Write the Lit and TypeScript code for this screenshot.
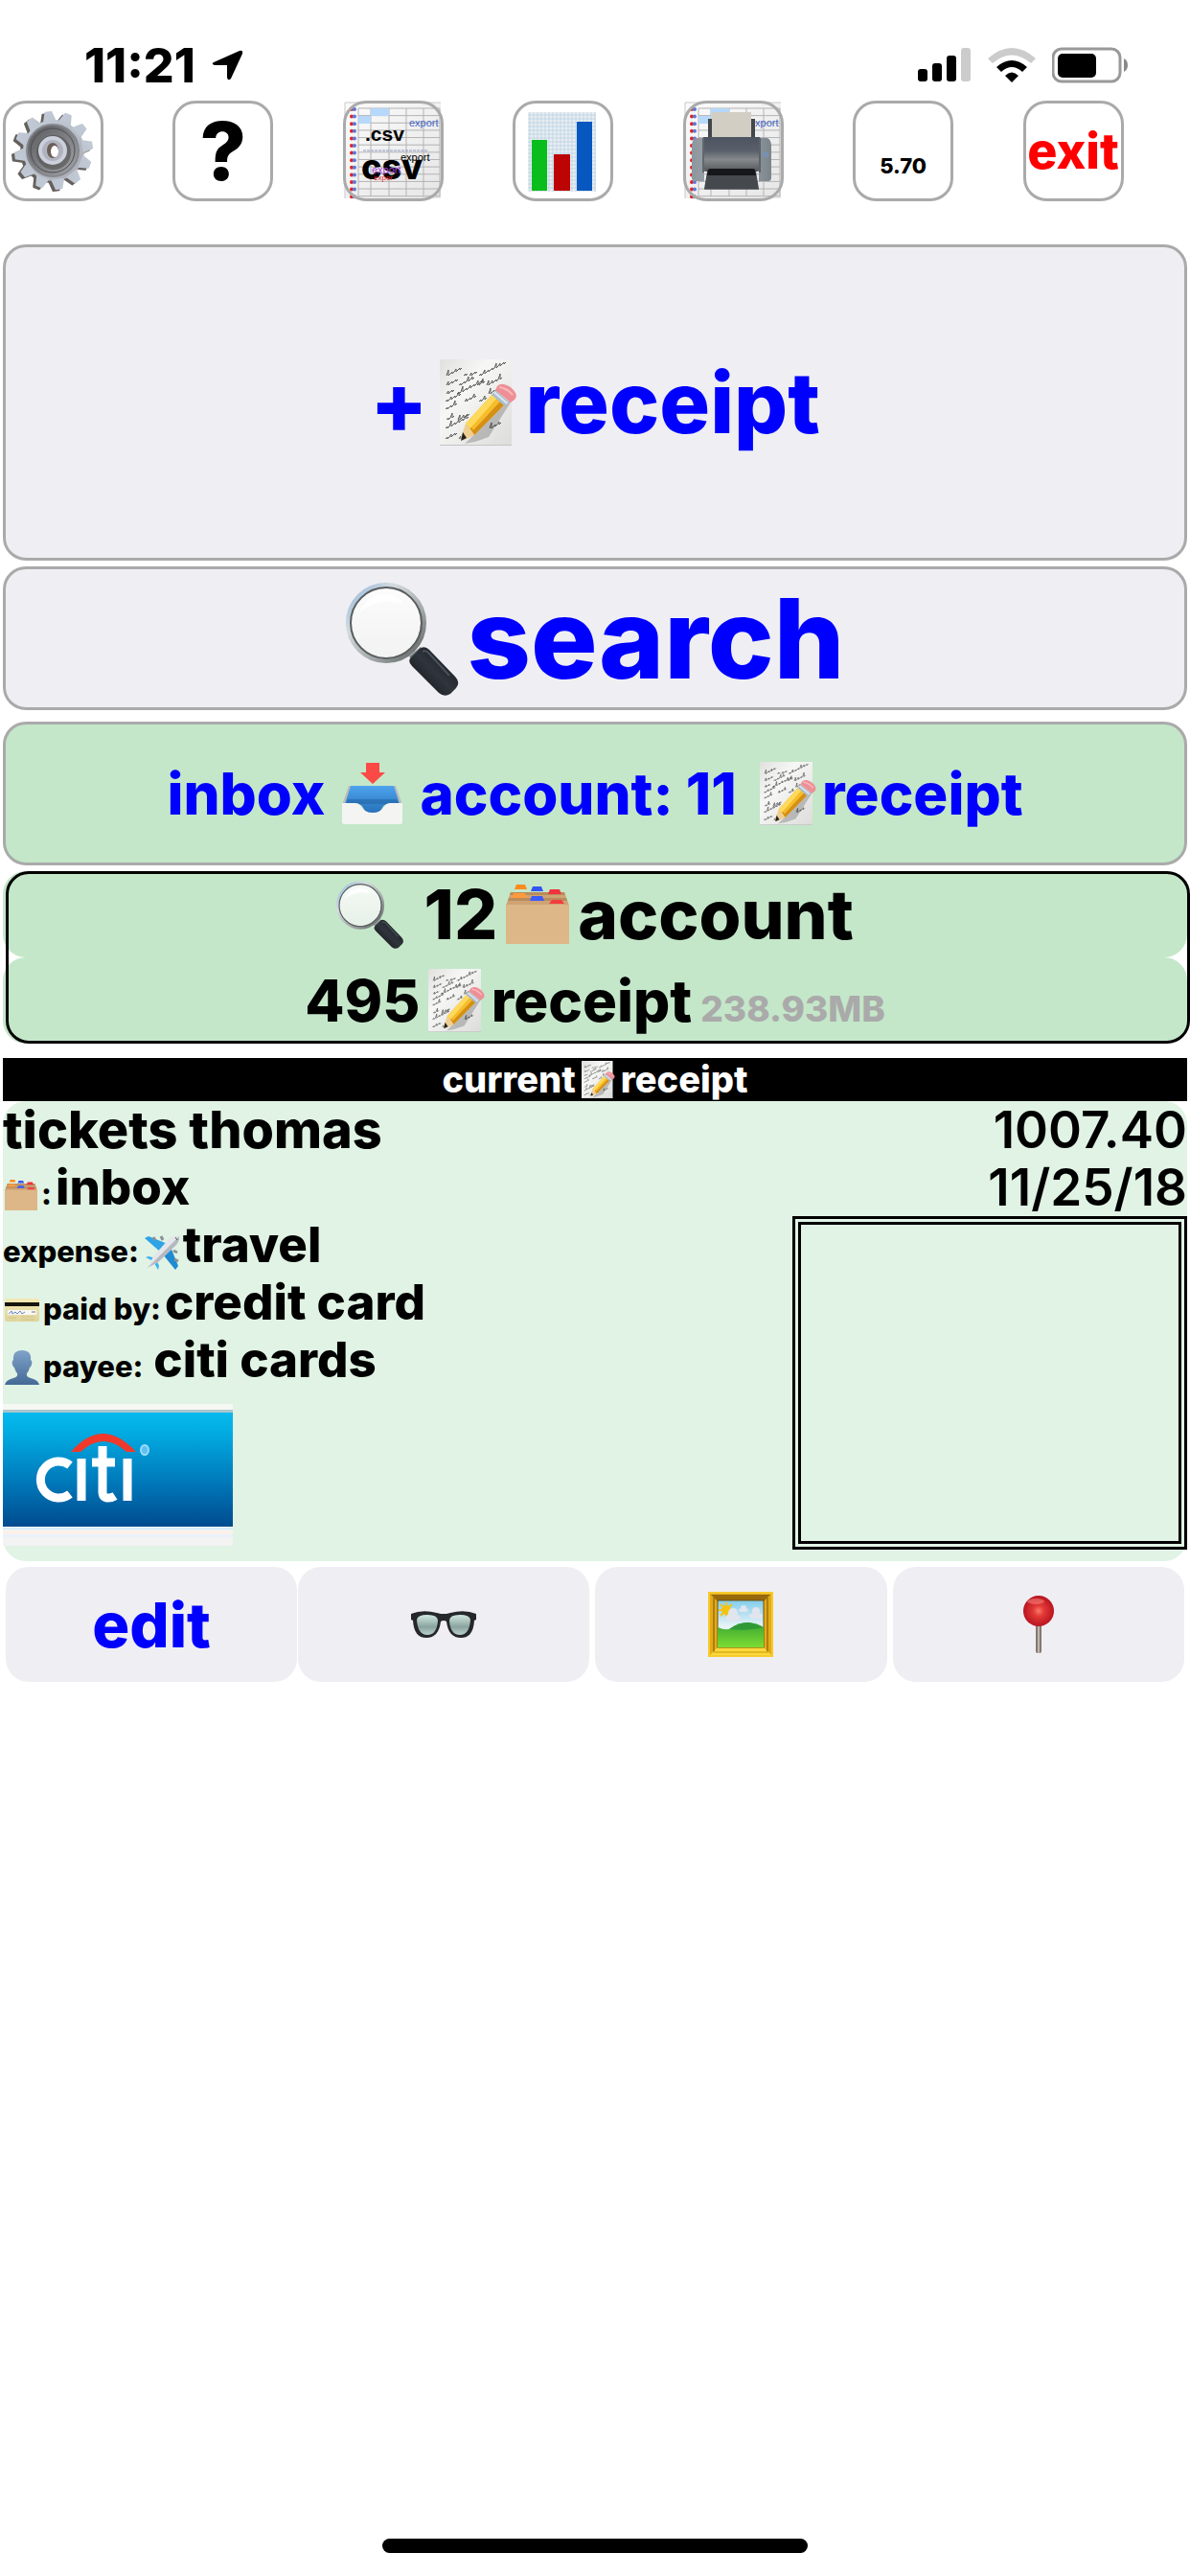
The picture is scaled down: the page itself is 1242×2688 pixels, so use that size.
import { LitElement, html, svg, css } from "lit";
import { customElement } from "lit/decorators.js";

const range = (n: number) => Array.from({ length: n }, (_, i) => i);

/* ---------- shared icons ---------- */

/* Rising strokes that make up one handwritten word. */
const STROKES = [6, 2, 3, 2, 4, 2, 2, 5, 3, 2];
const word = (x: number, y: number, letters: number, seed: number) =>
  `M${x} ${y}` +
  range(letters)
    .map((i) => {
      const h = STROKES[(i + seed) % STROKES.length];
      return `l2 ${-h}l0 ${h}l2 -2`;
    })
    .join("");

/* x, baseline, letters of each word on the note. */
const NOTE = [
  [7, 17, 4], [25, 17, 1], [31, 17, 2], [41, 17, 7],
  [7, 27, 3], [20, 27, 4], [39, 27, 2], [49, 27, 4],
  [7, 36, 2], [18, 36, 7], [51, 36, 3],
  [6, 44, 4], [26, 44, 3], [41, 44, 2], [51, 44, 2],
  [6, 52, 3],
  [7, 63, 2], [19, 63, 3], [34, 63, 3],
  [6, 72, 6], [52, 72, 3],
  [6, 83, 3], [20, 83, 1],
];

const memo = (size: string) => html`
  <svg class="icon ${size}" viewBox="0 0 81 90" aria-hidden="true">
    <defs>
      <linearGradient id="paper" x1="0" y1="0" x2="1" y2="1">
        <stop offset="0" stop-color="#e0e0de" />
        <stop offset=".35" stop-color="#f7f7f6" />
        <stop offset="1" stop-color="#dcdcda" />
      </linearGradient>
    </defs>
    <rect x="0" y="0" width="75" height="90" fill="url(#paper)" />
    <rect x="0" y="89" width="75" height="1" fill="#c4c4c4" />
    <g fill="none" stroke="#5c5c5c" stroke-width="1" stroke-linejoin="round">
      ${NOTE.map(([x, y, n], i) => svg`<path d=${word(x, y, n, i)} />`)}
    </g>
    <path d="M26 88l36-35 17-16-28 44-14 5z" fill="#000" opacity=".2" />
    <path d="M27 67L56 35l12 11L36 79z" fill="#f3b51c" />
    <path d="M27 67L56 35l5 4-29 33z" fill="#ffd95c" />
    <path d="M32 72l31-30 6 4L36 79z" fill="#d58f14" />
    <path d="M33 71l28-31 3 3-29 31z" fill="#f6bd2c" />
    <path d="M27 67l9 12-12 6-2-3z" fill="#efce92" />
    <path d="M24 76l4 6-6 3z" fill="#222" />
    <path d="M54 37l4-5 14 12-4 5z" fill="#a9bdcb" />
    <path d="M56 35l1-2 14 12-1 2z" fill="#dce6ee" />
    <path d="M58 32l2-4q3-3 7-2 8 2 12 9 2 4-1 7l-4 3z" fill="#ee8f96" />
    <path d="M62 29q8 1 14 8" stroke="#f9b9bc" stroke-width="2" fill="none" />
  </svg>
`;

const magnifier = (size: string) => html`
  <svg class="icon ${size}" viewBox="0 0 118 119" aria-hidden="true">
    <defs>
      <linearGradient id="rim" x1="0" y1="0" x2="1" y2="1">
        <stop offset="0" stop-color="#8fb6de" />
        <stop offset=".3" stop-color="#d5dbde" />
        <stop offset=".65" stop-color="#a3a9a8" />
        <stop offset="1" stop-color="#585c5c" />
      </linearGradient>
      <linearGradient id="grip" x1="0" y1="1" x2="1" y2="0">
        <stop offset="0" stop-color="#08090b" />
        <stop offset=".5" stop-color="#30353d" />
        <stop offset="1" stop-color="#0c0e11" />
      </linearGradient>
      <linearGradient id="lens" x1="0" y1="0" x2="0" y2="1">
        <stop offset="0" stop-color="#fff" stop-opacity=".85" />
        <stop offset="1" stop-color="#f4f4f3" stop-opacity=".7" />
      </linearGradient>
    </defs>
    <path d="M66 78l12-10 8 10-12 8z" fill="#767c7b" />
    <circle cx="42" cy="43" r="39" fill="url(#lens)" stroke="url(#rim)" stroke-width="6" />
    <circle cx="42" cy="43" r="37" fill="none" stroke="#5a5f5f" stroke-width="2" />
    <path d="M14 32q10-20 29-19 14 1 16 10-22-8-45 9z" fill="#fff" opacity=".8" />
    <path d="M77 70q5-4 10 1l27 28q6 6 1 12l-6 6q-6 4-12-1L69 88q-5-5-1-9z" fill="url(#grip)" />
    <path d="M80 73q3-2 6 1l22 24" stroke="#4a515c" stroke-width="2" fill="none" />
  </svg>
`;

const folder = (size: string) => html`
  <svg class="icon ${size}" viewBox="0 0 66 62" aria-hidden="true">
    <path d="M5 8h56l5 14v38q0 2-2 2H2q-2 0-2-2V22z" fill="#cfa373" />
    <path d="M5 8h56l1 3H4zM3 14h60l1 3H2z" fill="#b98c5c" />
    <path d="M9 5l2-5h9l2 5z" fill="#ff8a1e" />
    <path d="M26 7l2-5h9l2 5z" fill="#3355f5" />
    <path d="M44 10l2-5h10l2 5z" fill="#f0333c" />
    <path d="M6 14l2-5h12l2 5z" fill="#ff9a3c" />
    <path d="M25 17l2-5h11l2 5z" fill="#3c5cf8" />
    <path d="M45 20l3-4h10l3 4z" fill="#f43b40" />
    <path d="M0 23q0-2 2-2h62q2 0 2 2v37q0 2-2 2H2q-2 0-2-2z" fill="#deb788" />
  </svg>
`;

const tray = () => html`
  <svg class="icon tray" viewBox="0 0 63 64" aria-hidden="true">
    <defs>
      <linearGradient id="well" x1="0" y1="0" x2="0" y2="1">
        <stop offset="0" stop-color="#4ea4ee" />
        <stop offset="1" stop-color="#256fb8" />
      </linearGradient>
    </defs>
    <path d="M7 24h49l7 20H0z" fill="#b9bcbb" />
    <path d="M9 24h45l6 19H48q-4 0-6 4-3 6-10 6t-10-6q-2-4-6-4H3z" fill="url(#well)" />
    <path d="M6 38h51l2 5H4z" fill="#1f5f9f" opacity=".5" />
    <path d="M0 42h14q4 0 6 4 4 6 12 6t12-6q2-4 6-4h13v20q0 2-2 2H2q-2 0-2-2z" fill="#f4f4f2" />
    <path d="M25 0h14v10h6L32 22 19 10h6z" fill="#fb4a46" />
  </svg>
`;

const plane = () => html`
  <svg class="icon small" viewBox="0 0 36 36" aria-hidden="true">
    <path d="M0 3l4-2 20 8-8 8z" fill="#2ea3e6" />
    <path d="M32 36l3-4-8-20-8 8z" fill="#1e8bd2" />
    <path d="M1 23l3-1 8 2-3 3zM14 36l1-4-3-7-2 4z" fill="#3ab0f0" />
    <path d="M9 2l2 3M17 1l2 4M34 18l-4-2M35 27l-4-2" stroke="#8b9198" stroke-width="3" />
    <path d="M36 1q1 4-3 9L14 28 3 34l6-12L26 3q5-4 10-2z" fill="#e4e6ea" />
    <path d="M36 1q1 4-3 9L14 28 3 34z" fill="#b4b8bf" />
    <path d="M32 2l2 3" stroke="#4c5660" stroke-width="1" />
  </svg>
`;

const card = () => html`
  <svg class="icon small" viewBox="0 0 36 36" aria-hidden="true">
    <defs>
      <linearGradient id="plastic" x1="0" y1="0" x2="0" y2="1">
        <stop offset="0" stop-color="#f3e9b4" />
        <stop offset="1" stop-color="#e0d49c" />
      </linearGradient>
    </defs>
    <rect x="0" y="6" width="36" height="24" rx="2" fill="url(#plastic)" />
    <rect x="0" y="10" width="36" height="4" fill="#15130d" />
    <rect x="3" y="18" width="30" height="5" fill="#f7f7f3" />
    <path d="M4 22l3-3 1 3 3-2 2 2 3-3 2 3 3-2" stroke="#6a86c4" fill="none" />
    <path d="M28 20h4" stroke="#777" stroke-width="1" />
    <path d="M4 26h8M17 25h14M17 28h14" stroke="#d0c48e" stroke-width="1" />
  </svg>
`;

const person = () => html`
  <svg class="icon small" viewBox="0 0 36 36" aria-hidden="true">
    <defs>
      <linearGradient id="bust" x1="0" y1="0" x2="0" y2="1">
        <stop offset="0" stop-color="#7fa3c9" />
        <stop offset="1" stop-color="#456a96" />
      </linearGradient>
    </defs>
    <path
      d="M18 0q10 0 9 10 2 1 1 5-1 3-2 3-1 4-3 6-1 4 4 5 8 2 9 7H0q1-5 9-7 5-1 4-5-2-2-3-6-1 0-2-3-1-4 1-5-1-10 9-10z"
      fill="url(#bust)"
    />
  </svg>
`;

const citi = () => html`
  <svg class="logo" viewBox="0 0 240 148" role="img" aria-label="citi">
    <defs>
      <linearGradient id="sky" x1="0" y1="0" x2="0" y2="1">
        <stop offset="0" stop-color="#06b9ee" />
        <stop offset=".15" stop-color="#02aee4" />
        <stop offset=".6" stop-color="#007abb" />
        <stop offset="1" stop-color="#004b8e" />
      </linearGradient>
    </defs>
    <rect width="240" height="148" fill="#f3f3f4" />
    <rect width="240" height="6" fill="#f6f8f4" />
    <rect y="6" width="240" height="4" fill="#a9c6cd" />
    <rect y="9" width="240" height="119" fill="url(#sky)" />
    <rect y="129" width="240" height="2" fill="#d5eefa" />
    <rect y="132" width="240" height="4" fill="#fbf1ea" />
    <rect y="136" width="240" height="3" fill="#eaf1fb" />
    <path d="M71 50q33-38 68 0h-10q-24-22-48 0z" fill="#f0392b" />
    <g fill="none" stroke="#fff">
      <path d="M70 64a19 19 0 1 0 0 30" stroke-width="9" />
      <path d="M82 57v44M130 57v44" stroke-width="9" />
      <path d="M104 44v48q0 6 6 6 4 0 7-2M93 61h24" stroke-width="9" />
    </g>
    <ellipse cx="148" cy="48" rx="4" ry="5" fill="#5fc0f0" stroke="#9adcfa" stroke-width="2" />
  </svg>
`;

const glasses = () => html`
  <svg class="icon glasses" viewBox="0 0 68 28" aria-hidden="true">
    <defs>
      <linearGradient id="tint" x1="0" y1="0" x2="0" y2="1">
        <stop offset="0" stop-color="#cfe8df" />
        <stop offset=".6" stop-color="#8aa39f" />
        <stop offset="1" stop-color="#b9d0ca" />
      </linearGradient>
    </defs>
    <path
      d="M0 3q12-5 27-1l4 1h6l4-1q15-4 27 1v6l-2 1q-1 18-14 18-13 0-15-17-3-2-6 0-2 17-15 17Q3 28 2 10L0 9z"
      fill="#25272a"
    />
    <path d="M6 9q1-5 11-5 11 0 11 6-1 15-11 15Q7 25 6 9z" fill="url(#tint)" />
    <path d="M62 9q-1-5-11-5-11 0-11 6 1 15 11 15 10 0 11-16z" fill="url(#tint)" />
  </svg>
`;

const frame = () => html`
  <svg class="icon framed" viewBox="0 0 68 68" aria-hidden="true">
    <defs>
      <linearGradient id="air" x1="0" y1="0" x2="0" y2="1">
        <stop offset="0" stop-color="#83cdec" />
        <stop offset=".55" stop-color="#e6f3f7" />
      </linearGradient>
      <linearGradient id="grass" x1="0" y1="0" x2="0" y2="1">
        <stop offset="0" stop-color="#37a535" />
        <stop offset="1" stop-color="#7ddc32" />
      </linearGradient>
    </defs>
    <rect width="68" height="68" rx="1" fill="#e2ab17" />
    <path d="M3 3h62L58 10H10z" fill="#96690c" />
    <path d="M0 68h68L58 58H10z" fill="#fbd93a" />
    <rect x="1" y="1" width="66" height="66" fill="none" stroke="#f6cb2d" stroke-width="2" />
    <path d="M6 6v56M62 6v56" stroke="#b07c10" stroke-width="2" />
    <path d="M5 63h58" stroke="#c9930f" stroke-width="1" />
    <rect x="10" y="9" width="48" height="49" fill="url(#air)" stroke="#6b500f" stroke-width="1" />
    <path d="M10 37q9 4 14 1 10-7 19-6 9 1 15 5v21H10z" fill="url(#grass)" />
    <path d="M22 39q9-7 20-7 8 1 15 5-14 4-35 2z" fill="#2f9a35" />
    <circle cx="19" cy="19" r="5" fill="#f5c312" />
    <path d="M19 11v16M11 19h16M13 13l12 12M25 13L13 25" stroke="#f5c312" stroke-width="2" />
    <g fill="#e0e5ee">
      <circle cx="26" cy="22" r="5" />
      <ellipse cx="26" cy="27" rx="8" ry="4" />
      <circle cx="37" cy="17" r="3" />
      <ellipse cx="37" cy="19" rx="5" ry="2" />
      <circle cx="50" cy="20" r="4" />
      <ellipse cx="50" cy="25" rx="7" ry="3" />
    </g>
  </svg>
`;

const pin = () => html`
  <svg class="icon pin" viewBox="0 0 34 60" aria-hidden="true">
    <defs>
      <radialGradient id="bead" cx=".5" cy=".5" r=".5">
        <stop offset="0" stop-color="#fb7a6a" />
        <stop offset=".35" stop-color="#e23a37" />
        <stop offset="1" stop-color="#b81420" />
      </radialGradient>
    </defs>
    <rect x="14" y="28" width="6" height="32" rx="2" fill="#857870" />
    <rect x="16" y="28" width="2" height="32" fill="#c0b6af" />
    <circle cx="17" cy="16" r="16" fill="url(#bead)" />
    <ellipse cx="14" cy="6" rx="9" ry="3" fill="#ff8d88" opacity=".5" />
  </svg>
`;

/* ---------- toolbar pictures ---------- */

const gear = () => html`
  <svg class="art" viewBox="0 0 105 105" aria-hidden="true">
    <defs>
      <linearGradient id="steel" gradientUnits="userSpaceOnUse" x1="-30" y1="-30" x2="30" y2="30">
        <stop offset="0" stop-color="#c3cedb" />
        <stop offset=".5" stop-color="#b9bec8" />
        <stop offset="1" stop-color="#a9a8b0" />
      </linearGradient>
      <linearGradient id="dish" x1="0" y1="0" x2="1" y2="1">
        <stop offset="0" stop-color="#56585b" />
        <stop offset="1" stop-color="#a4a6aa" />
      </linearGradient>
    </defs>
    ${[0, 1].map(
      (layer) => svg`
        <g transform=${layer ? "translate(53 52)" : "translate(50 54)"} fill=${layer ? "url(#steel)" : "#66605c"}>
          <circle r="32" />
          ${range(12).map(
            (i) => svg`<path d="M-7 -30L-4 -40Q-4 -41 -3 -41H3Q4 -41 4 -40L7 -30z" transform="rotate(${i * 30 - 8})" />`
          )}
        </g>
      `
    )}
    <circle cx="52" cy="52" r="27" fill="url(#dish)" stroke="#85888d" stroke-width="2" />
    <circle cx="52" cy="52" r="23" fill="none" stroke="#4b4d50" stroke-width="1" />
    <circle cx="53" cy="54" r="18" fill="#504d4d" opacity=".6" />
    <circle cx="52" cy="52" r="15" fill="#cbd0dc" />
    <circle cx="52" cy="52" r="11" fill="#b0b3be" />
    <ellipse cx="52" cy="52" rx="6" ry="8" fill="#6b5f58" />
    <ellipse cx="54" cy="53" rx="4" ry="6" fill="#fff" />
  </svg>
`;

const sheet = () => svg`
  <defs>
    <linearGradient id="page" x1="0" y1="0" x2="1" y2="1">
      <stop offset="0" stop-color="#fbfbfb" />
      <stop offset="1" stop-color="#e6e6e6" />
    </linearGradient>
  </defs>
  <rect x="2" y="2" width="100" height="100" fill="url(#page)" />
  <path d="M2 102V2h100" fill="none" stroke="#c9c9c9" />
  <g stroke="#b3b3b3" stroke-width="1">
    ${[16, 29, 48, 66, 84, 101].map((x) => svg`<path d="M${x} 8V100" />`)}
    ${range(13).map((i) => svg`<path d="M16 ${8 + i * 7.64}H101" />`)}
  </g>
  <rect x="29" y="8" width="19" height="8" fill="#b5d8fb" />
  <rect x="16" y="16" width="13" height="8" fill="#b5d8fb" />
  ${range(13).map(
    (i) => svg`
      <circle cx="9" cy=${9 + i * 7.6} r="2" fill="#e32222" />
      <circle cx="12" cy=${9 + i * 7.6} r="2" fill="#5a78d8" />`
  )}
  <text class="t-export" x="69" y="27" fill="#4463c4">export</text>
`;

const csvArt = () => html`
  <svg class="art" viewBox="0 0 105 105" aria-hidden="true">
    ${sheet()}
    <text class="t-ext" x="23" y="42">.csv</text>
    <path d="M21 52h67" stroke="#8b9cc9" stroke-width="1" stroke-dasharray="3 1" />
    <text class="t-csv" x="19" y="82">csv</text>
    <text class="t-export" x="60" y="63">export</text>
    <text class="t-export" x="30" y="76" fill="#a445d6">export</text>
    <text class="t-tiny" x="32" y="83" fill="#e32222">expor</text>
  </svg>
`;

const printerArt = () => html`
  <svg class="art" viewBox="0 0 105 105" aria-hidden="true">
    ${sheet()}
    <defs>
      <linearGradient id="body" x1="0" y1="0" x2="0" y2="1">
        <stop offset="0" stop-color="#4c5461" />
        <stop offset=".4" stop-color="#59606a" />
        <stop offset=".65" stop-color="#85898c" />
        <stop offset="1" stop-color="#54585b" />
      </linearGradient>
      <linearGradient id="cap" x1="0" y1="0" x2="1" y2="0">
        <stop offset="0" stop-color="#8d959d" />
        <stop offset=".5" stop-color="#aab2b9" />
        <stop offset="1" stop-color="#7c848b" />
      </linearGradient>
    </defs>
    <path d="M26 19h4v20h-4zM71 19h4v20h-4z" fill="#43464b" />
    <path d="M30 12h41v28H30z" fill="#d3cec4" />
    <path d="M21 38h59v33q0 3-3 3H24q-3 0-3-3z" fill="url(#body)" />
    <path d="M25 74q0-3 3-3h45q3 0 3 3l3 18H22z" fill="#45494d" />
    <path d="M26 73q0-2 3-2h43q3 0 3 2l1 5H25z" fill="#15171a" />
    <path d="M22 92h57v1H22z" fill="#6c7074" />
    <path d="M14 39h8v45H12q-3 0-3-4V46q1-7 5-7zM79 39h8q4 0 5 7v34q0 4-3 4H79z" fill="url(#cap)" />
    <circle cx="86" cy="56" r="3" fill="#7791b4" />
    <path d="M21 39v36M80 39v36" stroke="#2e3236" stroke-width="1" />
  </svg>
`;

const chartArt = () => html`
  <svg class="art" viewBox="0 0 105 105" aria-hidden="true">
    <rect x="16" y="12" width="71" height="83" fill="#eceeef" />
    <g stroke="#bdd7ea" stroke-width="1">
      ${range(18).map((i) => svg`<path d="M${18 + i * 4} 12V95" />`)}
      ${range(20).map((i) => svg`<path d="M16 ${15 + i * 4}H87" />`)}
    </g>
    <path d="M20 41h16v53H20z" fill="#09bd1c" />
    <path d="M43 56h17v38H43z" fill="#bd0404" />
    <path d="M67 22h16v72H67z" fill="#0658c0" />
  </svg>
`;

@customElement("app-root")
export class AppRoot extends LitElement {
  static styles = css`
    :host {
      display: flex;
      flex-direction: column;
      min-height: 100vh;
      background: #fff;
      color: #000;
      font-family: Inter, "Liberation Sans", sans-serif;
      font-weight: 800;
      overflow-x: hidden;
    }
    * {
      box-sizing: border-box;
    }
    button {
      margin: 0;
      padding: 0;
      border: 0;
      background: none;
      color: inherit;
      font: inherit;
      cursor: pointer;
    }
    svg {
      display: block;
      flex: none;
    }

    .status {
      display: flex;
      align-items: center;
      justify-content: space-between;
      height: 105px;
      padding: 30px 65px 0 88px;
      font-size: 50px;
    }
    .status-left,
    .status-right {
      display: flex;
      align-items: center;
      gap: 17px;
    }

    .toolbar {
      display: grid;
      grid-template-columns: repeat(7, 1fr);
      padding-bottom: 45px;
    }
    .tool {
      position: relative;
      display: flex;
      align-items: center;
      justify-content: center;
      width: 105px;
      height: 105px;
      margin-left: 3px;
    }
    .tool::after {
      content: "";
      position: absolute;
      inset: 0;
      border: 3px solid #aaa;
      border-radius: 24px;
    }
    .art {
      width: 105px;
      height: 105px;
    }
    .help {
      font-size: 84px;
    }
    .amount {
      padding-top: 30px;
      font-size: 22px;
    }
    .exit {
      color: #f00;
      font-size: 52px;
    }
    .t-export {
      font: 11px "Liberation Sans", sans-serif;
    }
    .t-tiny {
      font: 8px "Liberation Sans", sans-serif;
    }
    .t-ext {
      font: bold 21px "Liberation Sans", sans-serif;
    }
    .t-csv {
      font: 800 36px Inter, sans-serif;
    }

    main {
      display: flex;
      flex-direction: column;
      padding: 0 3px;
    }
    .panel {
      display: flex;
      align-items: center;
      justify-content: center;
      min-height: 150px;
      border: 3px solid #aaa;
      border-radius: 24px;
      background: #efeef3;
      color: #00f;
      white-space: nowrap;
    }
    .add {
      min-height: 330px;
      margin-bottom: 6px;
      font-size: 88px;
      gap: 12px;
    }
    .add .pair {
      gap: 9px;
    }
    .search {
      margin-bottom: 12px;
      font-size: 116px;
      gap: 9px;
    }
    .inbox {
      margin-bottom: 6px;
      background: #c4e7c9;
      font-size: 60px;
      gap: 18px;
    }
    .pair {
      display: flex;
      align-items: center;
      gap: 6px;
    }
    .inbox .pair {
      margin-left: 6px;
    }

    .totals {
      position: relative;
      display: flex;
      flex-direction: column;
      margin-bottom: 15px;
    }
    .totals::after {
      content: "";
      position: absolute;
      inset: 0 -3px 0 3px;
      border: 3px solid #000;
      border-radius: 24px;
      pointer-events: none;
    }
    .total {
      display: flex;
      align-items: center;
      justify-content: center;
      gap: 9px;
      height: 90px;
      border-radius: 24px;
      background: #c4e7c9;
      line-height: 90px;
    }
    .accounts {
      font-size: 71px;
    }
    .receipts {
      font-size: 60px;
    }
    .lead {
      margin-right: 12px;
    }
    .size {
      color: #aaa;
      font-size: 37px;
      line-height: 37px;
    }
    .baseline {
      display: flex;
      align-items: baseline;
      gap: 9px;
    }

    .heading {
      display: flex;
      align-items: center;
      justify-content: center;
      gap: 6px;
      height: 45px;
      margin: 0;
      background: #000;
      color: #fff;
      font-size: 38px;
      font-weight: 800;
      line-height: 45px;
    }
    .receipt {
      display: flex;
      justify-content: space-between;
      min-height: 480px;
      border-radius: 24px;
      background: #e0f3e4;
      font-size: 51px;
      line-height: 60px;
    }
    .row {
      display: flex;
      align-items: baseline;
      height: 60px;
      gap: 4px;
    }
    .row .icon {
      align-self: center;
      margin: 16px 0 0 2px;
    }
    .title {
      font-size: 54px;
    }
    .label {
      font-size: 31px;
    }
    .side {
      display: flex;
      flex-direction: column;
      align-items: flex-end;
      width: 33.3%;
      font-size: 53px;
      font-weight: 600;
    }
    .photo {
      width: 100%;
      height: 348px;
      border: 9px double #000;
    }
    .logo {
      width: 240px;
      height: 148px;
      margin-top: 16px;
    }

    .actions {
      display: flex;
      gap: 6px;
      padding: 6px 3px 0;
    }
    .double {
      display: flex;
      flex: 2 1 0;
      gap: 1px;
    }
    .action {
      display: flex;
      flex: 1 1 0;
      align-items: center;
      justify-content: center;
      min-height: 120px;
      border-radius: 24px;
      background: #efeef3;
      color: #00f;
      font-size: 65px;
    }

    .xl {
      height: 90px;
    }
    .xxl {
      height: 119px;
    }
    .lg {
      height: 71px;
    }
    .md {
      height: 66px;
    }
    .mf {
      height: 62px;
    }
    .sm {
      height: 39px;
    }
    .tray {
      height: 64px;
    }
    .small {
      height: 36px;
    }
    .tiny {
      height: 32px;
    }
    .glasses {
      height: 28px;
    }
    .framed {
      height: 68px;
    }
    .pin {
      height: 60px;
    }

    .home {
      width: 444px;
      height: 15px;
      margin: auto auto 24px;
      border-radius: 8px;
      background: #000;
    }
  `;

  render() {
    return html`
      <header class="status">
        <div class="status-left">
          <span>11:21</span>
          <svg width="33" height="32" viewBox="0 0 33 32" aria-hidden="true">
            <path d="M2 13L29 1q4-1 3 3L20 30q-3 3-4-1V16H3q-4-1-1-3z" />
          </svg>
        </div>
        <div class="status-right">
          <svg width="56" height="36" viewBox="0 0 56 36" aria-hidden="true">
            <rect x="0" y="22" width="10" height="13" rx="3" />
            <rect x="15" y="16" width="10" height="19" rx="3" />
            <rect x="30" y="8" width="10" height="27" rx="3" />
            <rect x="45" y="0" width="10" height="35" rx="3" fill="#ccc" />
          </svg>
          <svg width="50" height="36" viewBox="0 0 50 36" aria-hidden="true">
            <path d="M0 11Q25-11 50 11l-5 5Q25-1 5 16z" fill="#ccc" />
            <path d="M9 20q16-14 32 0l-5 5q-11-10-22 0z" />
            <path d="M18 29q7-7 14 0l-7 7z" />
          </svg>
          <svg width="79" height="38" viewBox="0 0 79 38" aria-hidden="true">
            <rect x="1" y="2" width="70" height="34" rx="9" fill="none" stroke="#999" stroke-width="3" />
            <rect x="6" y="7" width="40" height="25" rx="5" />
            <path d="M75 12q4 2 4 7t-4 7z" fill="#888" />
          </svg>
        </div>
      </header>

      <nav class="toolbar" aria-label="Tools">
        <button class="tool" aria-label="Settings">${gear()}</button>
        <button class="tool help">?</button>
        <button class="tool" aria-label="Export CSV">${csvArt()}</button>
        <button class="tool" aria-label="Chart">${chartArt()}</button>
        <button class="tool" aria-label="Print">${printerArt()}</button>
        <button class="tool amount">5.70</button>
        <button class="tool exit">exit</button>
      </nav>

      <main>
        <button class="panel add">
          <span>+</span>
          <span class="pair">${memo("xl")}<span>receipt</span></span>
        </button>
        <button class="panel search">${magnifier("xxl")}<span>search</span></button>
        <button class="panel inbox">
          <span>inbox</span>${tray()}<span>account: 11</span>
          <span class="pair">${memo("md")}<span>receipt</span></span>
        </button>

        <section class="totals">
          <button class="total accounts">
            <span class="lead">${magnifier("lg")}</span><span>12</span>${folder("mf")}<span>account</span>
          </button>
          <button class="total receipts">
            <span>495</span>
            <span class="pair">
              ${memo("md")}
              <span class="baseline"><span>receipt</span><span class="size">238.93MB</span></span>
            </span>
          </button>
        </section>

        <h2 class="heading"><span>current</span>${memo("sm")}<span>receipt</span></h2>
        <section class="receipt">
          <div class="details">
            <div class="row title">tickets thomas</div>
            <div class="row">${folder("tiny")}<span class="label">:</span><span>inbox</span></div>
            <div class="row"><span class="label">expense:</span>${plane()}<span>travel</span></div>
            <div class="row">${card()}<span class="label">paid by:</span><span>credit card</span></div>
            <div class="row">
              ${person()}<span class="label">payee:&nbsp;</span><span>citi cards</span>
            </div>
            ${citi()}
          </div>
          <div class="side">
            <div class="row">1007.40</div>
            <div class="row">11/25/18</div>
            <div class="photo"></div>
          </div>
        </section>

        <nav class="actions" aria-label="Receipt actions">
          <div class="double">
            <button class="action">edit</button>
            <button class="action" aria-label="View">${glasses()}</button>
          </div>
          <button class="action" aria-label="Picture">${frame()}</button>
          <button class="action" aria-label="Location">${pin()}</button>
        </nav>
      </main>

      <div class="home"></div>
    `;
  }
}
